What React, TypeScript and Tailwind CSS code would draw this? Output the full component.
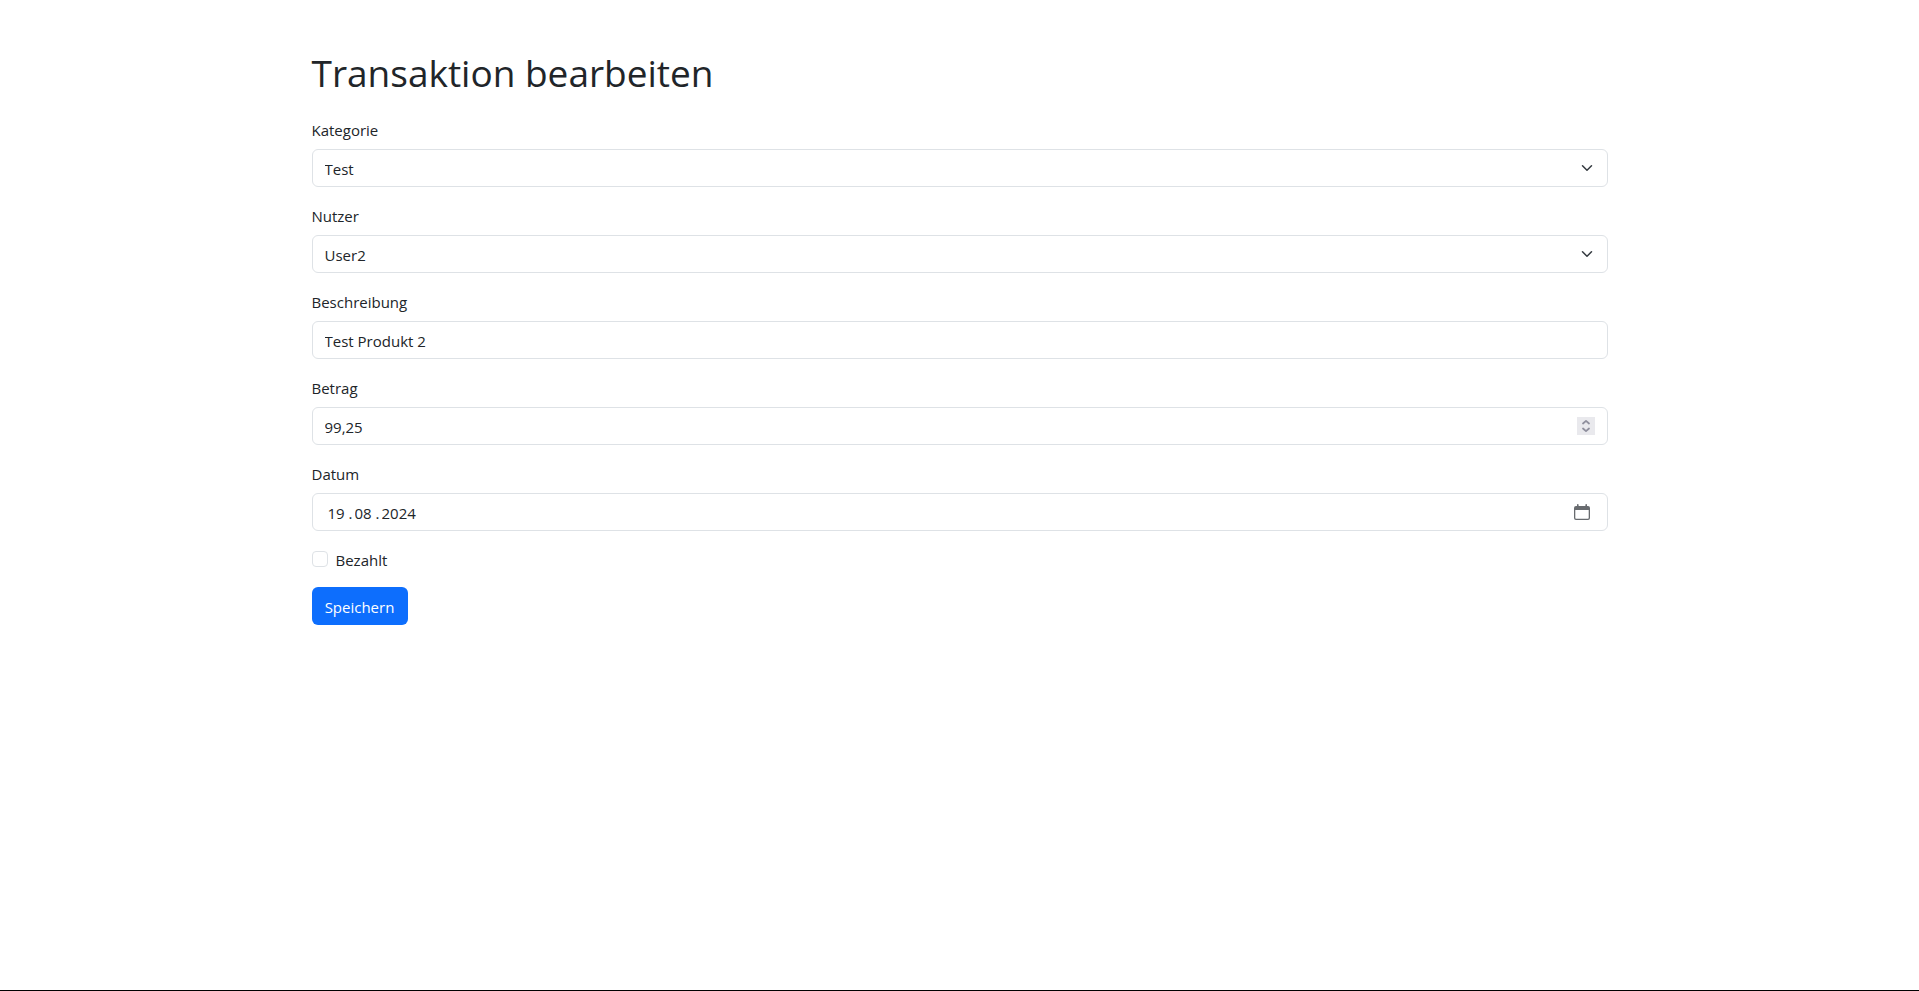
import { useState, type ReactNode } from "react";

const control =
  "h-[38px] w-full rounded-md border border-[#dee2e6] bg-white px-3 outline-none focus:border-[#86b7fe]";

function Field({ id, label, children }: { id: string; label: string; children: ReactNode }) {
  return (
    <div className="mb-4">
      <label htmlFor={id} className="mb-1.5 block leading-[26px]">
        {label}
      </label>
      {children}
    </div>
  );
}

function Select({ id, options }: { id: string; options: string[] }) {
  return (
    <div className="grid items-center">
      <select id={id} className={`${control} col-start-1 row-start-1 appearance-none pt-0.5`}>
        {options.map((o) => (
          <option key={o}>{o}</option>
        ))}
      </select>
      <svg
        viewBox="0 0 16 16"
        className="pointer-events-none col-start-1 row-start-1 mr-[13px] h-3 w-4 justify-self-end"
        fill="none"
        stroke="#343a40"
        strokeWidth="2"
        strokeLinecap="round"
        strokeLinejoin="round"
        aria-hidden="true"
      >
        <path d="m2 5 6 6 6-6" />
      </svg>
    </div>
  );
}

export default function App() {
  const [amount, setAmount] = useState("99,25");

  const step = (delta: number) =>
    setAmount((v) => (parseFloat(v.replace(",", ".")) + delta).toFixed(2).replace(".", ","));

  return (
    <div className="min-h-screen border-b border-black bg-white font-['Open_Sans','Noto_Sans',sans-serif] text-[15px] text-[#212529]">
      <main className="mx-auto max-w-[1320px] px-3 pt-12">
        <h1 className="mb-5 text-[37px] leading-[49px]">Transaktion bearbeiten</h1>
        <form onSubmit={(e) => e.preventDefault()}>
          <Field id="category" label="Kategorie">
            <Select id="category" options={["Test"]} />
          </Field>
          <Field id="user" label="Nutzer">
            <Select id="user" options={["User2"]} />
          </Field>
          <Field id="description" label="Beschreibung">
            <input id="description" type="text" defaultValue="Test Produkt 2" className={`${control} pt-0.5`} />
          </Field>
          <Field id="amount" label="Betrag">
            <div className={`${control} flex items-center`}>
              <input
                id="amount"
                type="text"
                inputMode="decimal"
                value={amount}
                onChange={(e) => setAmount(e.target.value)}
                className="min-w-0 flex-1 pt-0.5 outline-none"
              />
              <div className="flex h-[18px] w-[18px] flex-col bg-[#e9e9ed] text-[#8f8f9d]">
                <button type="button" aria-label="Erhöhen" onClick={() => step(0.01)} className="h-[9px]">
                  <svg viewBox="0 0 18 9" className="block h-[9px] w-[18px]" fill="none" stroke="currentColor" strokeWidth="1.8" strokeLinecap="round" strokeLinejoin="round">
                    <path d="M6 6.500 9 3.900l3 2.600" />
                  </svg>
                </button>
                <button type="button" aria-label="Verringern" onClick={() => step(-0.01)} className="h-[9px]">
                  <svg viewBox="0 0 18 9" className="block h-[9px] w-[18px]" fill="none" stroke="currentColor" strokeWidth="1.8" strokeLinecap="round" strokeLinejoin="round">
                    <path d="M6 2.500 9 5.100l3-2.600" />
                  </svg>
                </button>
              </div>
            </div>
          </Field>
          <Field id="day" label="Datum">
            <div className={`${control} flex items-center`}>
              <div className="flex flex-1 items-center pt-0.5 pl-[3px]">
                <input id="day" defaultValue="19" maxLength={2} className="w-[19px] outline-none" />
                <span className="w-2 text-center">.</span>
                <input aria-label="Monat" defaultValue="08" maxLength={2} className="w-[19px] outline-none" />
                <span className="w-2 text-center">.</span>
                <input aria-label="Jahr" defaultValue="2024" maxLength={4} className="w-9 outline-none" />
              </div>
              <button type="button" aria-label="Kalender öffnen" className="mr-[5px] text-[#686b6f]">
                <svg viewBox="0 0 16 16" className="block h-4 w-4" fill="currentColor">
                  <path
                    fillRule="evenodd"
                    d="M3 .8a.8.8 0 0 1 1.600 0V2h6.800V.8a.8.8 0 0 1 1.600 0V2h1a2 2 0 0 1 2 2v10a2 2 0 0 1-2 2H2a2 2 0 0 1-2-2V4a2 2 0 0 1 2-2h1ZM1.300 6v8a.8.8 0 0 0 .8.800h11.800a.8.8 0 0 0 .8-.800V6Z"
                  />
                </svg>
              </button>
            </div>
          </Field>
          <div className="mb-4 flex h-6 items-center gap-2">
            <input
              id="paid"
              type="checkbox"
              className="h-4 w-4 appearance-none rounded border border-[#dee2e6] bg-white checked:border-[#0d6efd] checked:bg-[#0d6efd]"
            />
            <label htmlFor="paid" className="pt-0.5 leading-6">
              Bezahlt
            </label>
          </div>
          <button type="submit" className="h-[38px] w-24 rounded-md bg-[#0d6efd] pt-0.5 text-white">
            Speichern
          </button>
        </form>
      </main>
    </div>
  );
}
